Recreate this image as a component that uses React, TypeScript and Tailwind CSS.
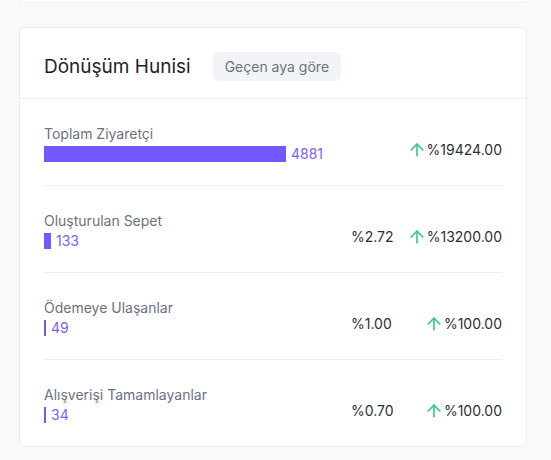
import { ArrowUp } from 'lucide-react';

interface FunnelStep {
  label: string;
  count: number;
  rate?: string;
  change: string;
}

const steps: FunnelStep[] = [
  { label: 'Toplam Ziyaretçi', count: 4881, change: '%19424.00' },
  { label: 'Oluşturulan Sepet', count: 133, rate: '%2.72', change: '%13200.00' },
  { label: 'Ödemeye Ulaşanlar', count: 49, rate: '%1.00', change: '%100.00' },
  { label: 'Alışverişi Tamamlayanlar', count: 34, rate: '%0.70', change: '%100.00' },
];

const MAX_BAR = 242;

export default function App() {
  const max = Math.max(...steps.map((s) => s.count));

  return (
    <div
      className="min-h-screen bg-[#f8f9fb] pl-[19px]"
      style={{ fontFamily: 'Inter, "Noto Sans", sans-serif' }}
    >
      {/* previous card, cut off at the top */}
      <div className="h-[3px] w-[508px] rounded-b-md border border-t-0 border-[#eceef2] bg-white" />

      <div className="mt-6 w-[508px] rounded-md border border-[#eceef2] bg-white">
        <div className="flex items-center border-b border-[#eceef2] px-6 pt-6 pb-[17px]">
          <h2 className="text-[19px] leading-7 text-[#1f2328]">Dönüşüm Hunisi</h2>
          <span className="ml-[22px] flex h-[29px] items-center rounded-md bg-[#f1f3f6] px-3 text-sm text-[#6b7280]">
            Geçen aya göre
          </span>
        </div>

        <div className="px-6">
          {steps.map((step, i) => (
            <div
              key={step.label}
              className={`flex items-end pt-[25px] pb-[21px] ${
                i < steps.length - 1 ? 'border-b border-[#eceef2]' : ''
              }`}
            >
              <div className="flex-1">
                <div className="text-sm leading-5 text-[#6b7280]">{step.label}</div>
                <div className="flex h-5 items-center gap-[5px]">
                  <div
                    className="h-4 bg-[#7357ff]"
                    style={{ width: Math.max(1, Math.round((step.count / max) * MAX_BAR)) }}
                  />
                  <span className="text-sm text-[#7b61ff]">{step.count}</span>
                </div>
              </div>
              <div className="mb-1 flex h-5 items-center text-sm leading-5 text-[#2b2f36]">
                <span className="w-[59px]">{step.rate ?? ''}</span>
                <span className="flex h-5 w-[92px] items-center justify-end">
                  <ArrowUp size={20} strokeWidth={2} className="shrink-0 text-[#3cc98f]" />
                  {step.change}
                </span>
              </div>
            </div>
          ))}
        </div>
      </div>
    </div>
  );
}
